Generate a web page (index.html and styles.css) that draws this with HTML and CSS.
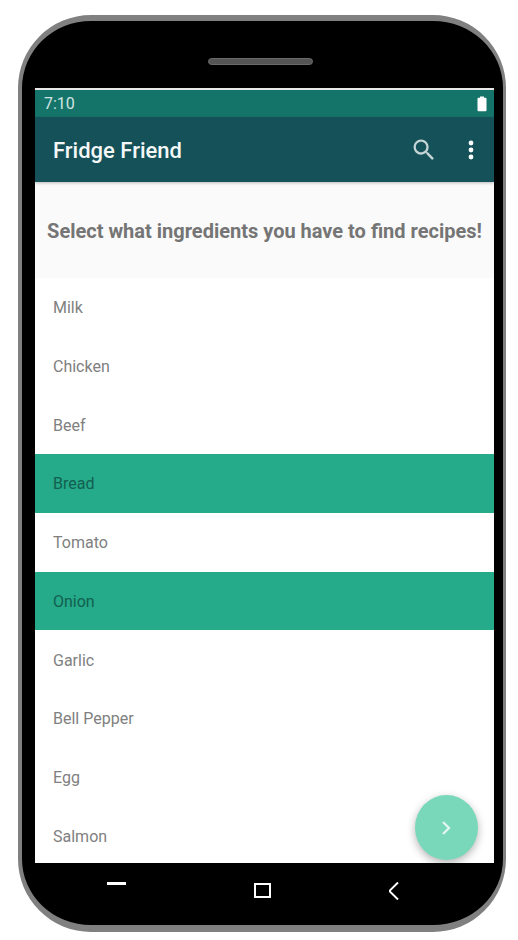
FILE: index.html
```html
<!DOCTYPE html>
<html lang="en">
<head>
<meta charset="utf-8">
<meta name="viewport" content="width=device-width, initial-scale=1">
<title>Fridge Friend</title>
<link rel="stylesheet" href="styles.css">
</head>
<body>
<div class="phone">
  <div class="bezel-top"><span class="speaker"></span></div>
  <div class="screen">
    <div class="status-bar">
      <time>7:10</time>
      <svg class="battery" width="10" height="16" viewBox="0 0 10 16" aria-hidden="true"><path d="M3 0.500h4v1.300h1.500q1 0 1 1v11.500q0 1-1 1h-7q-1 0-1-1V2.800q0-1 1-1H3z" fill="#fff"/></svg>
    </div>
    <header class="app-bar">
      <h1 class="app-title">Fridge Friend</h1>
      <button class="icon-button" type="button" aria-label="Search">
        <svg width="28" height="28" viewBox="0 0 24 24" aria-hidden="true"><path fill="#c5d4d6" d="M15.500 14h-.79l-.28-.27A6.471 6.471 0 0 0 16 9.500 6.500 6.500 0 1 0 9.500 16c1.610 0 3.090-.59 4.230-1.570l.27.28v.79l5 4.990L20.490 19l-4.990-5zm-6 0C7.010 14 5 11.990 5 9.500S7.010 5 9.500 5 14 7.010 14 9.500 11.990 14 9.500 14z"/></svg>
      </button>
      <button class="icon-button" type="button" aria-label="More options">
        <svg width="28" height="28" viewBox="0 0 28 28" aria-hidden="true"><g fill="#fff"><circle cx="13" cy="7" r="2.400"/><circle cx="13" cy="14" r="2.400"/><circle cx="13" cy="21" r="2.400"/></g></svg>
      </button>
    </header>
    <main class="content">
      <h2 class="prompt">Select what ingredients you have to find recipes!</h2>
      <div class="ingredients">
        <label class="ingredient"><input type="checkbox">Milk</label>
        <label class="ingredient"><input type="checkbox">Chicken</label>
        <label class="ingredient"><input type="checkbox">Beef</label>
        <label class="ingredient"><input type="checkbox" checked>Bread</label>
        <label class="ingredient"><input type="checkbox">Tomato</label>
        <label class="ingredient"><input type="checkbox" checked>Onion</label>
        <label class="ingredient"><input type="checkbox">Garlic</label>
        <label class="ingredient"><input type="checkbox">Bell Pepper</label>
        <label class="ingredient"><input type="checkbox">Egg</label>
        <label class="ingredient"><input type="checkbox">Salmon</label>
      </div>
    </main>
    <button class="fab" type="button" aria-label="Find recipes">
      <svg width="10" height="14" viewBox="0 0 10 14" aria-hidden="true"><path d="M1 1l6 6-6 6" fill="none" stroke="#e4f7f1" stroke-width="2.200"/></svg>
    </button>
  </div>
  <nav class="nav-bar" aria-label="System">
    <button class="nav-button" type="button" aria-label="Recent apps">
      <svg width="20" height="18" viewBox="0 0 20 18" aria-hidden="true"><path d="M0 0h19v3H0z" fill="#fff"/></svg>
    </button>
    <button class="nav-button" type="button" aria-label="Home">
      <svg width="26" height="18" viewBox="0 0 26 18" aria-hidden="true"><path d="M10 2h15v13H10z" fill="none" stroke="#fff" stroke-width="2"/></svg>
    </button>
    <button class="nav-button" type="button" aria-label="Back">
      <svg width="12" height="18" viewBox="0 0 12 18" aria-hidden="true"><path d="M10 0.500L2 8.300v1.400l8 7.800" fill="none" stroke="#fff" stroke-width="2"/></svg>
    </button>
  </nav>
</div>
</body>
</html>
```
FILE: styles.css
```css
* {
  box-sizing: border-box;
}

body {
  margin: 0;
  background: #fff;
  font-family: Roboto, "Liberation Sans", sans-serif;
}

button {
  display: flex;
  align-items: center;
  justify-content: center;
  padding: 0;
  border: 0;
  background: none;
  cursor: pointer;
}

.phone {
  display: flex;
  flex-direction: column;
  min-height: calc(100vh - 23px);
  margin: 15px 12px 8px 18px;
  padding: 0 9px 0 13px;
  border: solid #808080;
  border-width: 6px 3px 7px 4px;
  border-radius: 73px;
  background: #000;
}

.bezel-top {
  display: flex;
  justify-content: center;
  height: 67px;
  padding-top: 37px;
}

.speaker {
  width: 105px;
  height: 7px;
  margin-right: 8px;
  border: 1px solid #6a6a6a;
  border-radius: 4px;
  background: #555;
}

.screen {
  position: relative;
  display: flex;
  flex: 1;
  flex-direction: column;
  overflow: hidden;
  border-top: 2px solid #e8e8e8;
  background: #fff;
}

.status-bar {
  display: flex;
  align-items: center;
  justify-content: space-between;
  height: 27px;
  padding: 0 7px 0 9px;
  background: #15746a;
  color: #d0e3e1;
  font-size: 16px;
}

.app-bar {
  z-index: 1;
  display: flex;
  align-items: center;
  height: 65px;
  padding: 0 8px 0 18px;
  background: #145158;
  box-shadow: 0 1px 3px rgba(0, 0, 0, 0.25);
}

.app-title {
  flex: 1;
  margin: 0;
  padding-top: 2px;
  color: #f4f7f7;
  font-size: 22px;
  font-weight: 500;
}

.icon-button {
  width: 28px;
  height: 48px;
}

.icon-button + .icon-button {
  margin-left: 20px;
}

.content {
  display: flex;
  flex: 1;
  flex-direction: column;
}

.prompt {
  margin: 0;
  padding: 37px 8px 35px;
  background: #fafafa;
  color: #757575;
  font-size: 20px;
  font-weight: 700;
  line-height: 24px;
  text-align: center;
}

.ingredients {
  display: grid;
  flex: 1;
  grid-auto-rows: 1fr;
  margin-bottom: -2px;
}

.ingredient {
  display: flex;
  align-items: center;
  padding: 1px 18px 0;
  color: #808080;
  font-size: 16px;
  cursor: pointer;
}

.ingredient input {
  position: absolute;
  opacity: 0;
  pointer-events: none;
}

.ingredient:has(:checked) {
  background: #25aa8a;
  color: #12604f;
}

.fab {
  position: absolute;
  right: 16px;
  bottom: 3px;
  width: 63px;
  height: 65px;
  border-radius: 50%;
  background: #7ad8ba;
  box-shadow: 0 3px 8px rgba(0, 0, 0, 0.3);
}

.nav-bar {
  display: flex;
  align-items: center;
  justify-content: space-between;
  height: 62px;
  padding: 0 94px 6px 72px;
}
```
